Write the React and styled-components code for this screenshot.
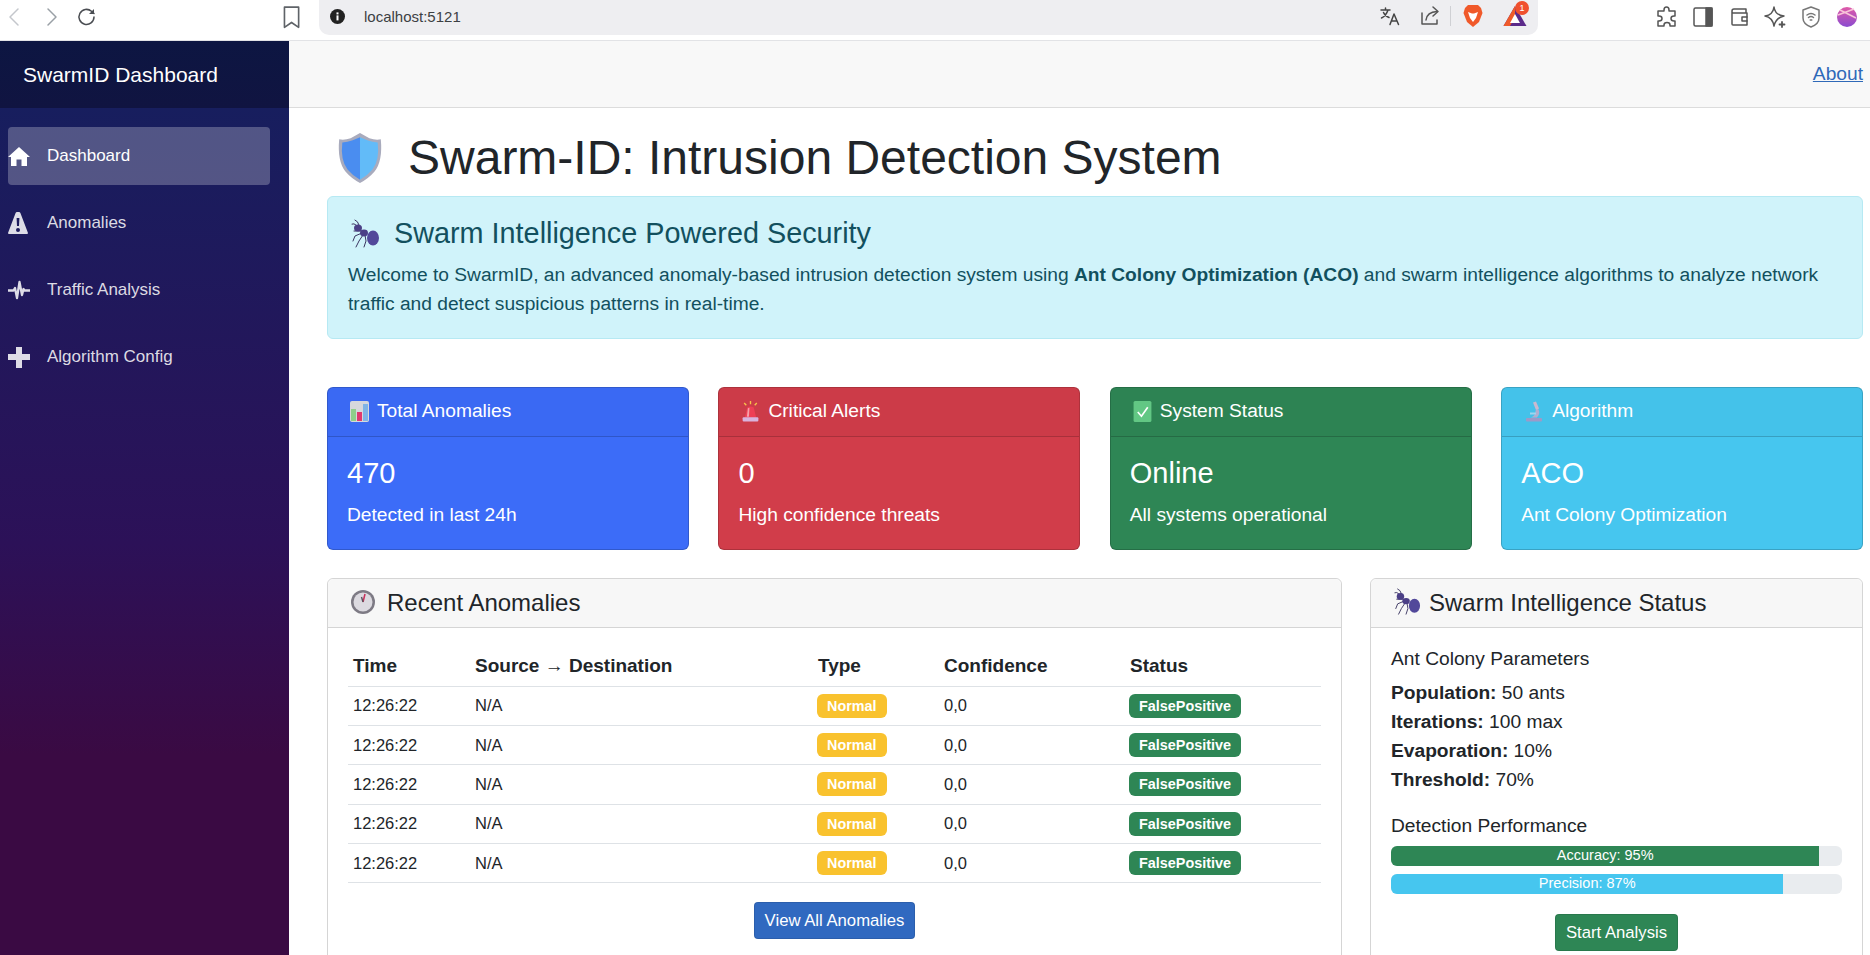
import React from 'react'
import styled, { createGlobalStyle } from 'styled-components'

const GlobalStyle = createGlobalStyle`
  html, body { margin: 0; padding: 0; height: 100%; overflow: hidden; }
  body { font-family: "Liberation Sans", Arial, sans-serif; color: #212529; background: #fff; }
  * { box-sizing: border-box; }
`

const Page = styled.div`
  width: 1870px;
  height: 955px;
  display: flex;
  flex-direction: column;
  overflow: hidden;
`

/* browser chrome */
const BrowserBar = styled.div`
  height: 41px;
  flex: none;
  display: flex;
  align-items: flex-start;
  background: #fff;
  border-bottom: 1px solid #e2e3e6;
`
const NavIcons = styled.div`
  width: 319px;
  height: 33px;
  flex: none;
  display: flex;
  align-items: center;
  padding-left: 4px;
`
const ChromeIcon = styled.svg`
  width: ${p => p.$size || 22}px;
  height: ${p => p.$size || 22}px;
  margin-right: ${p => p.$gap || 0}px;
  margin-left: ${p => p.$left || 0}px;
  flex: none;
  fill: none;
  stroke: ${p => p.$color || '#5f6368'};
  stroke-width: 1.5;
  stroke-linecap: round;
  stroke-linejoin: round;
`
const UrlBar = styled.div`
  width: 1219px;
  height: 35px;
  flex: none;
  display: flex;
  align-items: center;
  background: #eeeef1;
  border-radius: 0 0 10px 10px;
  padding: 0 0 3px 11px;
  position: relative;
`
const UrlText = styled.span`
  margin-left: 19px;
  font-size: 15px;
  color: #3c4043;
  flex: 1;
`
const BarDivider = styled.span`
  width: 1px;
  height: 20px;
  margin-right: 12px;
  background: #cfd0d4;
`
const BraveMark = styled.svg`
  width: 20px;
  height: 24px;
  margin-right: 20px;
  flex: none;
`
const BatMark = styled.svg`
  width: 24px;
  height: 22px;
  margin-right: 11px;
  flex: none;
`
const Badge = styled.span`
  position: absolute;
  right: 9px;
  top: 1px;
  width: 14px;
  height: 14px;
  border-radius: 50%;
  background: #f0502e;
  color: #fff;
  font-size: 9px;
  line-height: 14px;
  text-align: center;
`
const ExtIcons = styled.div`
  flex: 1;
  height: 33px;
  display: flex;
  align-items: center;
  padding-left: 117px;
`
const Avatar = styled.svg`
  width: 20px;
  height: 20px;
  margin-left: 2px;
  flex: none;
`

/* app shell */
const Shell = styled.div`
  flex: 1;
  display: flex;
  min-height: 0;
`
const Sidebar = styled.aside`
  width: 289px;
  flex: none;
  background: linear-gradient(180deg, #14205f 0%, #2c1158 55%, #3a0a43 78%, #3a0a43 100%);
  color: #fff;
`
const Brand = styled.div`
  height: 67px;
  padding-left: 23px;
  display: flex;
  align-items: center;
  font-size: 21px;
  background: rgba(0, 0, 0, 0.3);
`
const NavList = styled.nav`
  padding: 19px 19px 0 8px;
  display: flex;
  flex-direction: column;
  gap: 9px;
`
const NavItem = styled.a`
  height: 58px;
  display: flex;
  align-items: center;
  gap: 17px;
  font-size: 17px;
  border-radius: 4px;
  color: ${p => (p.$active ? '#fff' : 'rgba(255,255,255,0.85)')};
  background: ${p => (p.$active ? 'rgba(255,255,255,0.25)' : 'transparent')};
  svg { width: 22px; height: 24px; flex: none; fill: currentColor; }
`
const PulseLine = styled.path`
  fill: none;
  stroke: currentColor;
  stroke-width: 2.3;
  stroke-linejoin: round;
`

const Main = styled.main`
  flex: 1;
  min-width: 0;
`
const Topbar = styled.header`
  height: 67px;
  background: #f8f8f8;
  border-bottom: 1px solid #dcdcdc;
  display: flex;
  align-items: center;
  justify-content: flex-end;
  padding-right: 7px;
`
const AboutLink = styled.a`
  color: #2f69b8;
  font-size: 19.2px;
  text-decoration: underline;
`
const Content = styled.div`
  padding: 21px 7px 0 38px;
`
const PageTitle = styled.h1`
  margin: 0 0 9px;
  height: 58px;
  display: flex;
  align-items: center;
  gap: 25px;
  padding-left: 10px;
  font-size: 48px;
  font-weight: 400;
  line-height: 58px;
  color: #212529;
`
const Notice = styled.section`
  height: 143px;
  background: #d0f3fa;
  border: 1px solid #b6e9f3;
  border-radius: 6px;
  padding: 19px 20px 0;
  color: #12505e;
`
const NoticeTitle = styled.h4`
  margin: 0 0 9px;
  font-size: 28.8px;
  font-weight: 400;
  line-height: 35px;
  display: flex;
  align-items: center;
  gap: 14px;
  padding-left: 2px;
`
const NoticeText = styled.p`
  margin: 0;
  font-size: 19.2px;
  line-height: 29px;
`
const StatRow = styled.div`
  margin-top: 48px;
  display: grid;
  grid-template-columns: repeat(4, 1fr);
  gap: 29.5px;
`
const StatCard = styled.div`
  height: 163px;
  border-radius: 6px;
  background: ${p => p.$bg};
  border: 1px solid rgba(0, 0, 0, 0.175);
  color: #fff;
`
const StatHeader = styled.div`
  height: 49px;
  padding: 0 0 2px 22px;
  display: flex;
  align-items: center;
  gap: 8px;
  font-size: 19.2px;
  border-bottom: 1px solid rgba(0, 0, 0, 0.175);
  background: rgba(0, 0, 0, 0.02);
`
const StatBody = styled.div`
  padding: 19px 19px 0;
`
const StatValue = styled.div`
  font-size: 29px;
  line-height: 34px;
`
const StatNote = styled.div`
  margin-top: 11px;
  font-size: 19.2px;
  line-height: 27px;
`
const Columns = styled.div`
  margin-top: 28px;
  display: grid;
  grid-template-columns: 1015px 493px;
  gap: 28px;
`
const Panel = styled.section`
  height: 420px;
  border: 1px solid #d5d5d5;
  border-radius: 6px;
  background: #fff;
`
const PanelHeader = styled.div`
  height: 49px;
  background: #f7f7f7;
  border-bottom: 1px solid #d5d5d5;
  border-radius: 6px 6px 0 0;
  padding: 0 0 2px 22px;
  display: flex;
  align-items: center;
  gap: ${p => p.$gap || 11}px;
  font-size: 24px;
  line-height: 29px;
  color: #212529;
`
const PanelBody = styled.div`
  padding: 20px 20px 0;
`
const Table = styled.table`
  width: 100%;
  border-collapse: collapse;
  font-size: 16.5px;
`
const HeadCell = styled.th`
  text-align: left;
  font-size: 19px;
  font-weight: 700;
  height: 38px;
  padding: 0 5px 2px;
  border-bottom: 1px solid #dee2e6;
  width: ${p => p.$w}px;
`
const Cell = styled.td`
  height: 39.4px;
  padding: 0 5px;
  border-bottom: 1px solid #dee2e6;
  color: #212529;
`
const Pill = styled.span`
  display: inline-block;
  height: 24px;
  line-height: 24px;
  padding: 0 10px;
  margin-left: -1px;
  border-radius: 6px;
  font-size: 14.4px;
  font-weight: 700;
  color: #fff;
  background: ${p => p.$bg};
`
const Center = styled.div`
  margin-top: ${p => p.$top}px;
  display: flex;
  justify-content: center;
`
const Button = styled.button`
  height: 37px;
  padding: 0 10px;
  border-radius: 4px;
  border: 1px solid rgba(0, 0, 0, 0.1);
  background: ${p => p.$bg};
  color: #fff;
  font-family: inherit;
  font-size: 16.7px;
`
const SubHeading = styled.div`
  font-size: 19.2px;
  line-height: 22px;
  margin-bottom: ${p => p.$after}px;
`
const Param = styled.div`
  font-size: 19.2px;
  line-height: 29px;
  strong { font-weight: 700; }
`
const ParamGroup = styled.div`
  margin-bottom: 21px;
`
const Track = styled.div`
  height: 20px;
  border-radius: 6px;
  background: #e9ecef;
  overflow: hidden;
  margin-bottom: 8px;
`
const Fill = styled.div`
  height: 100%;
  background: ${p => p.$bg};
  color: #fff;
  font-size: 14.5px;
  line-height: 19px;
  text-align: center;
`

/* drawings */
const ShieldIcon = () => (
  <svg width="46" height="52" viewBox="0 0 44 50">
    <path d="M22 1 L31 6 Q37 8 42 7 Q44 28 36 38 Q30 45 22 49 Q14 45 8 38 Q0 28 2 7 Q7 8 13 6 Z" fill="#a9abbd" />
    <path d="M22 5 V46 Q15 42 10 36 Q3 27 5 10 Q10 10 15 8 Z" fill="#4a8df0" />
    <path d="M22 5 V46 Q29 42 34 36 Q41 27 39 10 Q34 10 29 8 Z" fill="#62bbf8" />
  </svg>
)

const AntIcon = ({ size = 30 }) => (
  <svg width={size} height={size} viewBox="0 0 30 30" fill="none">
    <g stroke="#3a3560" strokeWidth="1" strokeLinecap="round">
      <path d="M5 1 Q8 2 9 6" />
      <path d="M2 5 Q4 4 6 6" />
      <path d="M12 14 L5 17 L3 22" />
      <path d="M13 16 L9 22 L6 28" />
      <path d="M15 16 L16 22 L14 28" />
      <path d="M11 12 L4 12" />
    </g>
    <ellipse cx="8" cy="9" rx="4" ry="3.6" fill="#4b3f86" />
    <ellipse cx="14" cy="14" rx="4" ry="3.4" fill="#4b3f86" />
    <ellipse cx="23" cy="19" rx="6" ry="7.5" fill="#52489a" />
  </svg>
)

const ClockIcon = () => (
  <svg width="26" height="26" viewBox="0 0 26 26">
    <circle cx="13" cy="13" r="12" fill="#7d7a84" />
    <circle cx="13" cy="13" r="9.5" fill="#dcdae0" />
    <path d="M13 13 L15 5" stroke="#c8315c" strokeWidth="1.6" />
    <path d="M13 13 L11.5 8" stroke="#55525c" strokeWidth="1.4" />
  </svg>
)

const ChartEmoji = () => (
  <svg width="19" height="21" viewBox="0 0 19 21">
    <rect x="0" y="0" width="19" height="21" rx="2" fill="#d6d8dc" />
    <rect x="1" y="8" width="5" height="12" fill="#8fcf8a" />
    <rect x="7" y="11" width="5" height="9" fill="#e0396e" />
    <rect x="13" y="3" width="5" height="17" fill="#7fb4e6" />
  </svg>
)

const SirenEmoji = () => (
  <svg width="19" height="21" viewBox="0 0 18 20">
    <path d="M3.5 16 L6 6 Q9 4.5 12 6 L14.5 16 Z" fill="#ee3f55" />
    <path d="M6.5 7 L5.5 15 H7.5 L8 6.5 Z" fill="#f7a0a8" />
    <rect x="1.5" y="15.5" width="15" height="4" rx="1" fill="#d9b3dd" />
    <path d="M9 0 V3 M3 2 L5 4 M15 2 L13 4" stroke="#f7c34a" strokeWidth="1.3" />
  </svg>
)

const CheckEmoji = () => (
  <svg width="19" height="21" viewBox="0 0 18 20">
    <rect x="0.5" y="0" width="17" height="20" rx="1.5" fill="#62c784" />
    <path d="M4.5 10.5 L8 14.5 L14 6" stroke="#fff" strokeWidth="1.6" fill="none" />
  </svg>
)

const MicroscopeEmoji = () => (
  <svg width="20" height="21" viewBox="0 0 20 20">
    <rect x="2" y="16.5" width="16" height="3.5" rx="1" fill="#9c9ac8" />
    <path d="M14 7 Q17 12 13 16 H7 Q12 14 11.5 9 Z" fill="#b2aed0" />
    <path d="M9 1 L12 0 L15 7 L12 8.5 Z" fill="#c9b9cf" />
    <path d="M6 11 H12 V13 H6 Z" fill="#9fd4ee" />
  </svg>
)

const HomeIcon = () => (
  <svg viewBox="0 0 22 24"><path d="M11 3 L22 13 H19 V22 H13.5 V15.5 H8.5 V22 H3 V13 H0 Z" /></svg>
)
const WarningIcon = () => (
  <svg viewBox="0 0 22 24"><path fillRule="evenodd" d="M9 1 H11 Q12 1 12.4 2 L20 22 Q20 23 19 23 H1 Q0 23 0 22 L7.6 2 Q8 1 9 1 Z M8.6 7 L9 15 H11 L11.4 7 Z M10 17 A2 2 0 1 0 10 21 A2 2 0 1 0 10 17 Z" /></svg>
)
const ActivityIcon = () => (
  <svg viewBox="0 0 22 24"><PulseLine d="M0 12.5 H5.5 L7 10 L9 20 L11.5 4 L14 17 L15.5 11 L16.5 12.5 H22" /></svg>
)
const PlusIcon = () => (
  <svg viewBox="0 0 22 24"><path d="M8 2 H14 V9 H22 V15 H14 V23 H8 V15 H0 V9 H8 Z" /></svg>
)

const rows = [0, 1, 2, 3, 4]

const App = () => {
  return (
    <Page>
      <GlobalStyle />
      <BrowserBar>
        <NavIcons>
          <ChromeIcon viewBox="0 0 22 22" $gap={14} $color="#c4c7cc"><path d="M14 3 L6 11 L14 19" /></ChromeIcon>
          <ChromeIcon viewBox="0 0 22 22" $gap={14} $color="#9aa0a6"><path d="M8 3 L16 11 L8 19" /></ChromeIcon>
          <ChromeIcon viewBox="0 0 22 22" $color="#4a4d52"><path d="M18 11 A7.5 7.5 0 1 1 15.5 5.3 L18 7.5" /><path d="M18 3 V8 H13" fill="#4a4d52" stroke="none" /></ChromeIcon>
          <ChromeIcon viewBox="0 0 22 22" $left={181} $size={24} $color="#5f6368"><path d="M5 2 H18 V20.5 L11.5 16 L5 20.5 Z" /></ChromeIcon>
        </NavIcons>
        <UrlBar>
          <svg width="15" height="15" viewBox="0 0 15 15"><circle cx="7.5" cy="7.5" r="7.5" fill="#222" /><rect x="6.5" y="6.4" width="2" height="5" fill="#fff" /><rect x="6.5" y="3.4" width="2" height="2" fill="#fff" /></svg>
          <UrlText>localhost:5121</UrlText>
          <ChromeIcon viewBox="0 0 22 22" $gap={18} $color="#444"><path d="M2 5 H11 M6.5 3 V5 M9 5 Q7 11 2.5 13 M4.5 7.5 Q6 11 10 12.5" /><path d="M11 19.5 L15 9 L19.5 19.5 M12.5 16 H18" /></ChromeIcon>
          <ChromeIcon viewBox="0 0 22 22" $gap={9} $color="#555"><path d="M3 8 V19 H18 V15" /><path d="M7 15 Q8 7 18 6.5" /><path d="M14 2 L19 6.5 L14 11" /></ChromeIcon>
          <BarDivider />
          <BraveMark viewBox="0 0 20 24">
            <path d="M5 1 H15 L18 4 L19.5 9 L16 18 L10 23 L4 18 L0.5 9 L2 4 Z" fill="#f0592a" />
            <path d="M5 8 L9 9.5 H11 L15 8 L13 14 L10 18 L7 14 Z" fill="#fff" />
          </BraveMark>
          <BatMark viewBox="0 0 24 22">
            <path d="M12 1 L23.5 21 H0.5 Z" fill="#5b2a8a" />
            <path d="M12 1 L0.5 21 H7 L12 12 Z" fill="#ef5a2a" />
            <path d="M12 9 L17 18 H7 Z" fill="#fff" />
          </BatMark>
          <Badge>1</Badge>
        </UrlBar>
        <ExtIcons>
          <ChromeIcon viewBox="0 0 24 24" $size={24} $gap={12} $color="#555"><path d="M9 5 Q9 2 11.5 2 Q14 2 14 5 V6 H20 V11 H19 Q16 11 16 13.5 Q16 16 19 16 H20 V21 H15 V20 Q15 17.5 12 17.5 Q9 17.5 9 20 V21 H3 V16 H4 Q7 16 7 13.5 Q7 11 4 11 H3 V6 H9 Z" /></ChromeIcon>
          <ChromeIcon viewBox="0 0 24 24" $size={24} $gap={12} $color="#555"><rect x="3" y="3" width="18" height="18" rx="1.5" /><rect x="15" y="3" width="6" height="18" fill="#555" /></ChromeIcon>
          <ChromeIcon viewBox="0 0 24 24" $size={24} $gap={12} $color="#555"><path d="M5 6 V19 Q5 20 6 20 H20 V8 H6 Q5 8 5 6 Q5 4 7 4 H19 V8" /><path d="M20 12 H15 V16 H20" /></ChromeIcon>
          <ChromeIcon viewBox="0 0 24 24" $size={24} $gap={12} $color="#555"><path d="M11 2 Q12 10 21 11 Q13 12.5 11 21 Q9.5 12.5 2 11 Q10 10 11 2 Z" /><path d="M19 17 V22 M16.5 19.5 H21.5" strokeWidth="1.8" /></ChromeIcon>
          <ChromeIcon viewBox="0 0 24 24" $size={24} $gap={12} $color="#777"><path d="M12 2 L20 5 V13 Q20 19 12 22 Q4 19 4 13 V5 Z" /><path d="M8 10 Q12 7 16 10 M9.5 12.5 Q12 10.5 14.5 12.5 M11.2 15 H12.8" /></ChromeIcon>
          <Avatar viewBox="0 0 20 20">
            <defs>
              <linearGradient id="avatarFill" x1="0" y1="0" x2="0" y2="1">
                <stop offset="0" stopColor="#e05aa8" />
                <stop offset="1" stopColor="#8a4bd0" />
              </linearGradient>
            </defs>
            <circle cx="10" cy="10" r="10" fill="url(#avatarFill)" />
            <path d="M1 8 L17 2 M3 3 L19 11" stroke="#f8c3d8" strokeWidth="1.6" />
          </Avatar>
        </ExtIcons>
      </BrowserBar>
      <Shell>
        <Sidebar>
          <Brand>SwarmID Dashboard</Brand>
          <NavList>
            <NavItem $active><HomeIcon />Dashboard</NavItem>
            <NavItem><WarningIcon />Anomalies</NavItem>
            <NavItem><ActivityIcon />Traffic Analysis</NavItem>
            <NavItem><PlusIcon />Algorithm Config</NavItem>
          </NavList>
        </Sidebar>
        <Main>
          <Topbar><AboutLink href="#">About</AboutLink></Topbar>
          <Content>
            <PageTitle><ShieldIcon />Swarm-ID: Intrusion Detection System</PageTitle>
            <Notice>
              <NoticeTitle><AntIcon />Swarm Intelligence Powered Security</NoticeTitle>
              <NoticeText>
                Welcome to SwarmID, an advanced anomaly-based intrusion detection system using <strong>Ant Colony Optimization (ACO)</strong> and swarm intelligence algorithms to analyze network traffic and detect suspicious patterns in real-time.
              </NoticeText>
            </Notice>
            <StatRow>
              <StatCard $bg="#3c6cf8">
                <StatHeader><ChartEmoji />Total Anomalies</StatHeader>
                <StatBody><StatValue>470</StatValue><StatNote>Detected in last 24h</StatNote></StatBody>
              </StatCard>
              <StatCard $bg="#d13d4a">
                <StatHeader><SirenEmoji />Critical Alerts</StatHeader>
                <StatBody><StatValue>0</StatValue><StatNote>High confidence threats</StatNote></StatBody>
              </StatCard>
              <StatCard $bg="#2e8655">
                <StatHeader><CheckEmoji />System Status</StatHeader>
                <StatBody><StatValue>Online</StatValue><StatNote>All systems operational</StatNote></StatBody>
              </StatCard>
              <StatCard $bg="#46c6ef">
                <StatHeader><MicroscopeEmoji />Algorithm</StatHeader>
                <StatBody><StatValue>ACO</StatValue><StatNote>Ant Colony Optimization</StatNote></StatBody>
              </StatCard>
            </StatRow>
            <Columns>
              <Panel>
                <PanelHeader><ClockIcon />Recent Anomalies</PanelHeader>
                <PanelBody>
                  <Table>
                    <thead>
                      <tr>
                        <HeadCell $w={122}>Time</HeadCell>
                        <HeadCell $w={343}>Source → Destination</HeadCell>
                        <HeadCell $w={126}>Type</HeadCell>
                        <HeadCell $w={186}>Confidence</HeadCell>
                        <HeadCell>Status</HeadCell>
                      </tr>
                    </thead>
                    <tbody>
                      {rows.map(r => (
                        <tr key={r}>
                          <Cell>12:26:22</Cell>
                          <Cell>N/A</Cell>
                          <Cell><Pill $bg="#f9c22e">Normal</Pill></Cell>
                          <Cell>0,0</Cell>
                          <Cell><Pill $bg="#2e8655">FalsePositive</Pill></Cell>
                        </tr>
                      ))}
                    </tbody>
                  </Table>
                  <Center $top={19}><Button $bg="#3069c0">View All Anomalies</Button></Center>
                </PanelBody>
              </Panel>
              <Panel>
                <PanelHeader $gap={8}><AntIcon size={28} />Swarm Intelligence Status</PanelHeader>
                <PanelBody>
                  <SubHeading $after={8}>Ant Colony Parameters</SubHeading>
                  <ParamGroup>
                    <Param><strong>Population:</strong> 50 ants</Param>
                    <Param><strong>Iterations:</strong> 100 max</Param>
                    <Param><strong>Evaporation:</strong> 10%</Param>
                    <Param><strong>Threshold:</strong> 70%</Param>
                  </ParamGroup>
                  <SubHeading $after={9}>Detection Performance</SubHeading>
                  <Track><Fill $bg="#2e8655" style={{ width: '95%' }}>Accuracy: 95%</Fill></Track>
                  <Track><Fill $bg="#46c6ef" style={{ width: '87%' }}>Precision: 87%</Fill></Track>
                  <Center $top={20}><Button $bg="#2e8655">Start Analysis</Button></Center>
                </PanelBody>
              </Panel>
            </Columns>
          </Content>
        </Main>
      </Shell>
    </Page>
  )
}

export default App
